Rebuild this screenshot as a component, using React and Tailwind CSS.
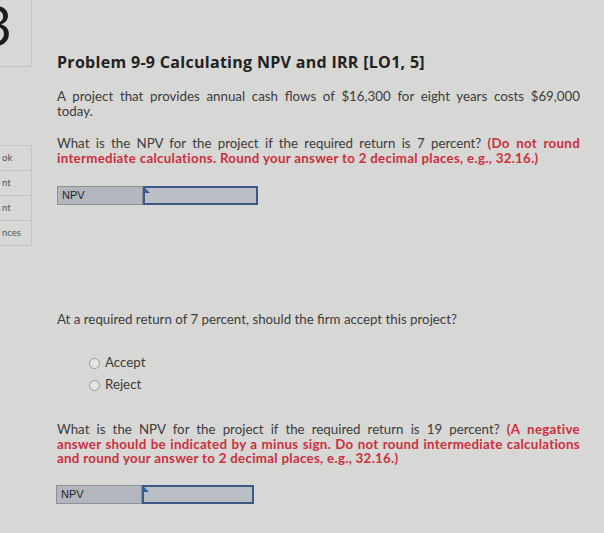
import React from 'react';

const body = { fontFamily: 'Lato, "Open Sans", sans-serif' };

// one justified line that stretches to the full width (except the last one)
const Line = ({ children, last }) => (
  <div className={last ? 'text-left' : 'text-justify [text-align-last:justify]'}>{children}</div>
);

const Red = ({ children }) => <b className="text-[#cc2f3d] tracking-[0.3px]">{children}</b>;

const NpvBox = ({ labelW, inputW }) => (
  <div className="flex h-[19px]">
    <div
      className="flex items-center border border-[#8d9299] bg-[#b3b7bd] pl-[4px] text-[11px] text-[#1f2329]"
      style={{ width: labelW, fontFamily: '"Liberation Sans", Arial, sans-serif' }}
    >
      NPV
    </div>
    <div className="relative border-2 border-[#3d5887] bg-[#babec5]" style={{ width: inputW }}>
      <span className="absolute left-0 top-0 h-0 w-0 border-l-[5px] border-t-[5px] border-l-[#2f5da6] border-t-transparent" />
    </div>
  </div>
);

const Radio = ({ label }) => (
  <div className="flex h-[22px] items-center gap-[5px]">
    <span className="h-[11px] w-[11px] rounded-full border border-[#9a9a9a] bg-[#e4e4e2]" />
    <span className="text-[13.3px] text-[#3c3c3c]">{label}</span>
  </div>
);

const SideItem = ({ text }) => (
  <div className="flex h-[25px] items-center border-b border-r border-[#c5c5c3] pl-[2px] text-[9.5px] text-[#555]">
    {text}
  </div>
);

export default function App() {
  return (
    <div className="flex h-[533px] w-[604px] overflow-hidden bg-[#d7d7d5]" style={body}>
      {/* Sidebar */}
      <div className="w-[32px] shrink-0">
        <div className="relative h-[67px] overflow-hidden border-b border-r border-[#c5c5c3]">
          <span className="absolute right-[19px] top-[-3px] text-[56px] font-normal leading-none text-[#1c1c1c]">3</span>
        </div>
        <div className="mt-[78px] border-t border-[#c5c5c3]">
          <SideItem text="ok" />
          <SideItem text="nt" />
          <SideItem text="nt" />
          <SideItem text="nces" />
        </div>
      </div>

      {/* Main */}
      <div className="w-[523px] pl-[25px] box-content text-[#3c3c3c]">
        <h1
          className="mt-[52px] text-[16px] font-bold leading-[20px] tracking-[0.3px] text-[#222]"
          style={{ fontFamily: '"Open Sans", Lato, sans-serif' }}
        >
          Problem 9-9 Calculating NPV and IRR [LO1, 5]
        </h1>

        <div className="mt-[17px] text-[13.3px] leading-[15px]">
          <Line>A project that provides annual cash flows of $16,300 for eight years costs $69,000</Line>
          <Line last>today.</Line>
        </div>

        <div className="mt-[17px] text-[13.3px] leading-[15px]">
          <Line>
            What is the NPV for the project if the required return is 7 percent? <Red>(Do not round</Red>
          </Line>
          <Line last>
            <Red>intermediate calculations. Round your answer to 2 decimal places, e.g., 32.16.)</Red>
          </Line>
        </div>

        <div className="mt-[20px]">
          <NpvBox labelW={86} inputW={115} />
        </div>

        <p className="mt-[107px] text-[13.3px] leading-[15px]">
          At a required return of 7 percent, should the firm accept this project?
        </p>

        <div className="ml-[32px] mt-[25px]">
          <Radio label="Accept" />
          <Radio label="Reject" />
        </div>

        <div className="mt-[26px] text-[13.3px] leading-[14.5px]">
          <Line>
            What is the NPV for the project if the required return is 19 percent? <Red>(A negative</Red>
          </Line>
          <Line>
            <Red>answer should be indicated by a minus sign. Do not round intermediate calculations</Red>
          </Line>
          <Line last>
            <Red>and round your answer to 2 decimal places, e.g., 32.16.)</Red>
          </Line>
        </div>

        <div className="-ml-px mt-[19px]">
          <NpvBox labelW={86} inputW={112} />
        </div>
      </div>
    </div>
  );
}
